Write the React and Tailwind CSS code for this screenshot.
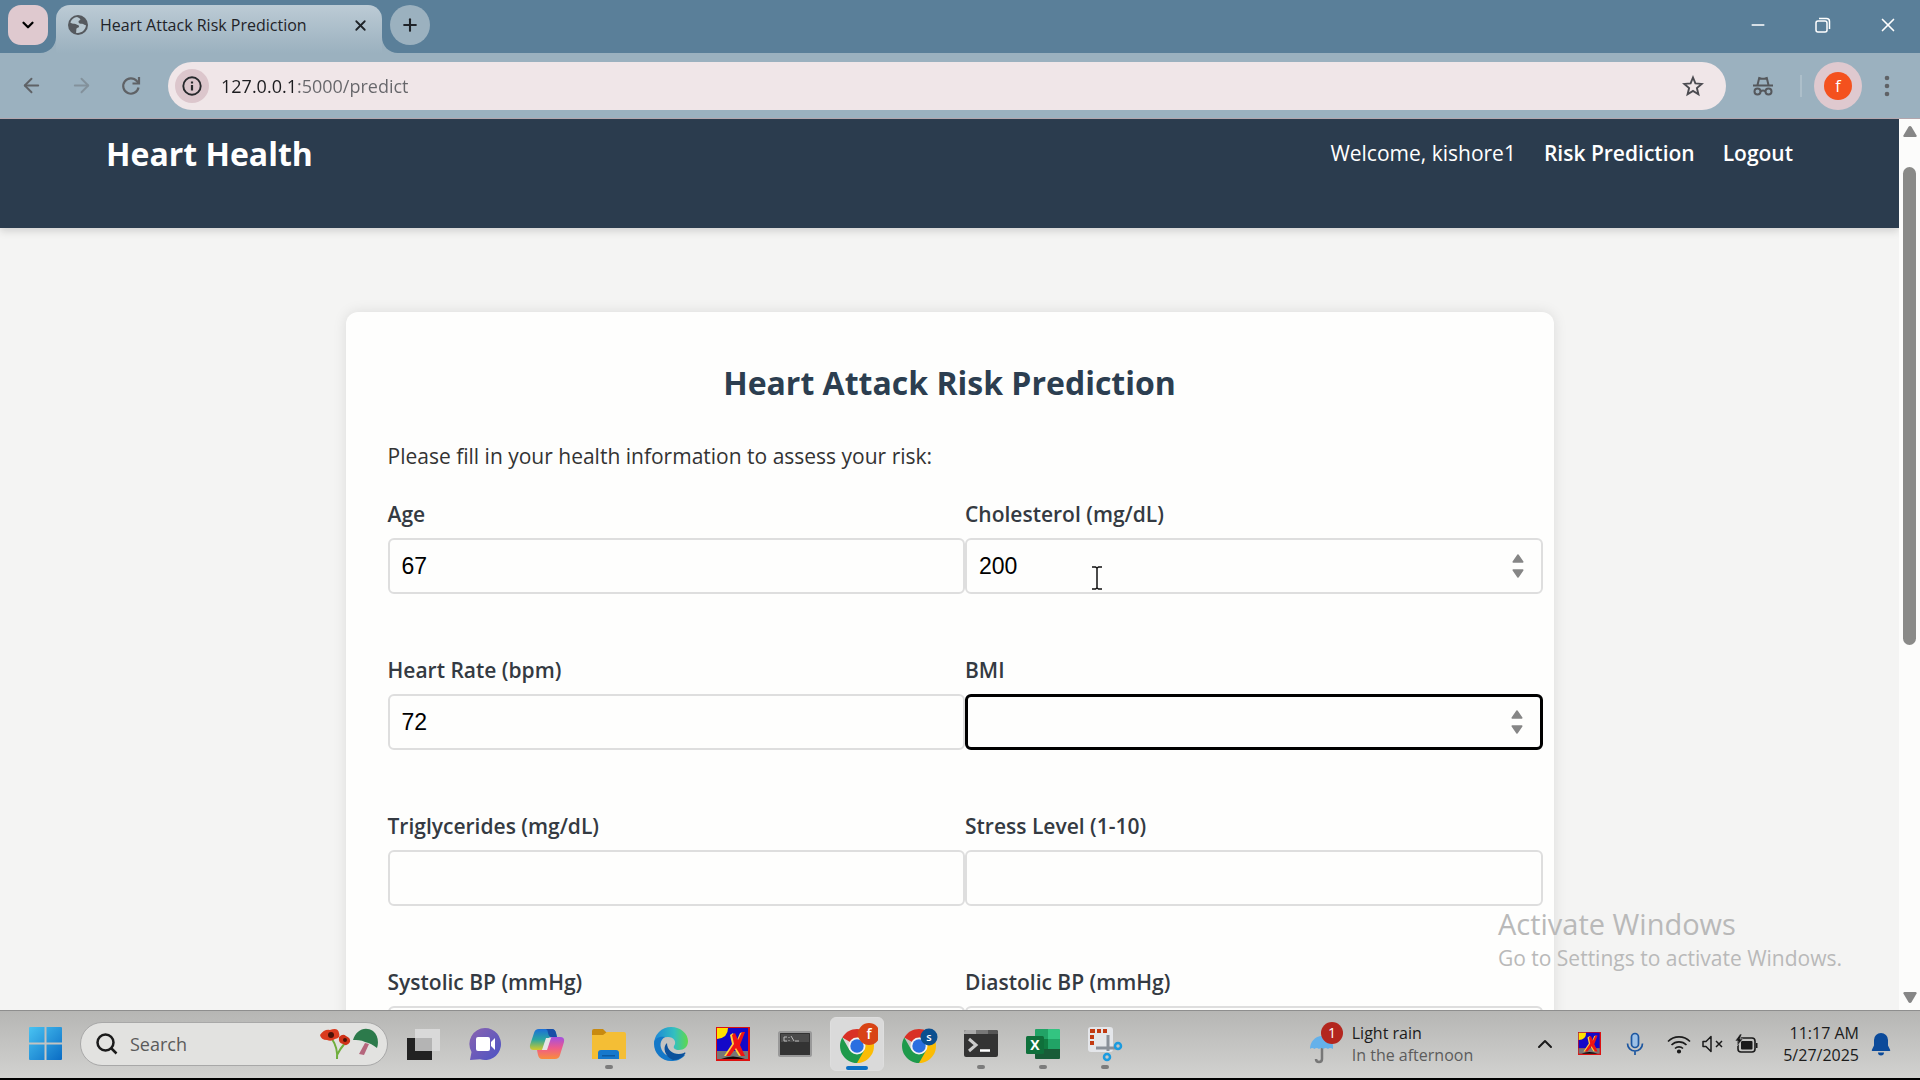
import { ArrowLeft, ArrowRight, ChevronDown, ChevronUp, Minus, Plus, X } from 'lucide-react'

const chromeIcon = 'flex h-12 w-[50px] shrink-0 items-center justify-center text-[#5f6266]'

function TabStrip() {
  return (
    <div className="flex h-[53px] shrink-0 items-start bg-[#5a7f99] pl-2 pt-[5px]">
      <button aria-label="Search tabs" className="flex h-10 w-10 items-center justify-center rounded-[13px] bg-[#dfc9cf] text-black">
        <ChevronDown size={18} strokeWidth={3} />
      </button>
      <div className="relative ml-2 flex h-12 w-[326px] items-start rounded-t-[14px] bg-linear-to-b from-[#bccbd5] to-[#9bb1bf] pl-3 pr-2 text-[#1f2328]">
        <svg className="absolute bottom-0 -left-4" width="16" height="16" viewBox="0 0 16 16">
          <path d="M16 0v16H0C9 16 16 9 16 0z" fill="#9bb1bf" />
        </svg>
        <svg className="absolute bottom-0 -right-4" width="16" height="16" viewBox="0 0 16 16">
          <path d="M0 0v16h16C7 16 0 9 0 0z" fill="#9bb1bf" />
        </svg>
        <div className="flex h-10 flex-1 items-center">
          <svg width="20" height="20" viewBox="0 0 20 20">
            <circle cx="10" cy="10" r="10" fill="#55595e" />
            <path d="M9 2c-3 .4-5.800 2.500-6.700 5.500 1.300 1 2.700 1.500 4.200 1.300 1.500 0 2 1 3.300 1.200 1.700.2 1.700 2.500 0 2.800-1.500.2-1.500 1.500-1.500 2.700 0 1-.3 1.800-.3 2.300 5 1 9.700-2.500 10-7.500-1.600-.2-2.500-1.500-4-1.500-1.800 0-3.500-.2-3.500-2 0-1.400 1.300-1 1.800-2 .4-.9-.8-1.700-3.300-2.800z" fill="#b7c7d0" />
          </svg>
          <span className="ml-3 flex-1 whitespace-nowrap text-base">Heart Attack Risk Prediction</span>
          <button aria-label="Close tab" className="flex h-7 w-7 items-center justify-center">
            <X size={17} strokeWidth={2.500} />
          </button>
        </div>
      </div>
      <button aria-label="New tab" className="ml-2 flex h-10 w-10 items-center justify-center rounded-full bg-[#9bb1bf] text-[#1f2328]">
        <Plus size={20} strokeWidth={2.500} />
      </button>
      <div className="ml-auto flex h-10 items-center text-white">
        <button aria-label="Minimize" className="flex w-[65px] justify-center">
          <Minus size={20} strokeWidth={1.800} />
        </button>
        <button aria-label="Restore" className="flex w-[65px] justify-center">
          <svg width="16" height="16" viewBox="0 0 16 16" fill="none" stroke="currentColor" strokeWidth="1.500">
            <rect x="1" y="4" width="11" height="11" rx="2" />
            <path d="M4 1.500h7.500a3 3 0 0 1 3 3V12" />
          </svg>
        </button>
        <button aria-label="Close" className="flex w-[65px] justify-center">
          <X size={22} strokeWidth={1.800} />
        </button>
      </div>
    </div>
  )
}

function Toolbar() {
  return (
    <div className="flex h-[66px] shrink-0 items-center border-b border-[#b3a6ad] bg-[#9bb1bf] pl-1.5 pr-2">
      <button aria-label="Back" className={chromeIcon}>
        <ArrowLeft size={23} />
      </button>
      <button aria-label="Forward" className="flex h-12 w-[50px] shrink-0 items-center justify-center text-[#83919b]">
        <ArrowRight size={23} />
      </button>
      <button aria-label="Reload" className={chromeIcon}>
        <svg width="20" height="20" viewBox="0 0 20 20" fill="none" stroke="currentColor" strokeWidth="2.200">
          <path d="M17.500 11.500A7.700 7.700 0 1 1 15.800 5l2 2.200" />
          <path d="M18 1v6.500h-6.500" />
        </svg>
      </button>
      <div className="ml-3 flex h-12 flex-1 items-center rounded-full bg-[#f0e6e8] pl-[7px] pr-[22px]">
        <button aria-label="View site information" className="flex h-[34px] w-[34px] items-center justify-center rounded-full bg-[#dcc6cc]">
          <svg width="20" height="20" viewBox="0 0 20 20" fill="none" stroke="#27292c">
            <circle cx="10" cy="10" r="8.700" strokeWidth="1.900" />
            <path d="M10 9v5.500M10 5.500v2" strokeWidth="2.200" />
          </svg>
        </button>
        <input
          aria-label="Address"
          defaultValue="127.0.0.1:5000/predict"
          className="ml-3 w-full flex-1 bg-[linear-gradient(90deg,#1c1c1f_76px,#66666a_76px)] bg-clip-text text-lg text-transparent outline-none"
        />
        <button aria-label="Bookmark this tab">
          <svg width="22" height="22" viewBox="0 0 22 22" fill="none" stroke="#4b4b50" strokeWidth="1.900">
            <path d="M11 2.500l2.400 5.900 6.300.5-4.800 4.100 1.500 6.200-5.400-3.300-5.400 3.300 1.500-6.200L2.300 8.900l6.300-.5z" />
          </svg>
        </button>
      </div>
      <div className="ml-3 flex h-12 w-[50px] items-center justify-center">
        <svg width="22" height="20" viewBox="0 0 22 20" fill="none" stroke="#55585c" strokeWidth="2">
          <path d="M1 9.500h20M5.500 9l1.700-7 2.300.8h3L14.800 2l1.700 7" />
          <circle cx="5.500" cy="15.500" r="3" />
          <circle cx="16.500" cy="15.500" r="3" />
          <path d="M8.500 15.500c1.500-1.200 3.500-1.200 5 0" />
        </svg>
      </div>
      <div className="mx-3 h-[22px] w-0.5 bg-[#adbfca]" />
      <button aria-label="Profile" className="flex h-12 w-12 items-center justify-center rounded-full bg-[#dfc9cf]">
        <span className="flex h-7 w-7 items-center justify-center rounded-full bg-[#f4511e] text-base leading-7 text-white">f</span>
      </button>
      <button aria-label="Menu" className={chromeIcon}>
        <svg width="6" height="22" viewBox="0 0 6 22" fill="currentColor">
          <circle cx="3" cy="3" r="2.300" />
          <circle cx="3" cy="11" r="2.300" />
          <circle cx="3" cy="19" r="2.300" />
        </svg>
      </button>
    </div>
  )
}

function Spinner() {
  return (
    <svg className="mr-4 shrink-0" width="14" height="26" viewBox="0 0 14 26" fill="#868686" stroke="#868686" strokeLinejoin="round" strokeWidth="1.500">
      <path d="M7 2l4.800 7H2.200z" />
      <path d="M7 24l4.800-7H2.200z" />
    </svg>
  )
}

function TextCursor() {
  return (
    <svg className="absolute left-[124px] top-[26px]" width="12" height="24" viewBox="0 0 12 24" fill="none" stroke="#111" strokeWidth="1.500">
      <path d="M1 1h3.500L6 2l1.500-1H11M6 2v20M1 23h3.500L6 22l1.500 1H11" />
    </svg>
  )
}

const fields = [
  { id: 'age', label: 'Age', value: '67' },
  { id: 'cholesterol', label: 'Cholesterol (mg/dL)', value: '200', spinner: true, cursor: true },
  { id: 'heart_rate', label: 'Heart Rate (bpm)', value: '72' },
  { id: 'bmi', label: 'BMI', value: '', spinner: true, focused: true },
  { id: 'triglycerides', label: 'Triglycerides (mg/dL)', value: '' },
  { id: 'stress', label: 'Stress Level (1-10)', value: '' },
  { id: 'systolic', label: 'Systolic BP (mmHg)', value: '' },
  { id: 'diastolic', label: 'Diastolic BP (mmHg)', value: '' },
]

function Field({ id, label, value, spinner, focused, cursor }) {
  return (
    <div className="flex flex-col pb-[60px]">
      <label htmlFor={id} className="mb-2 text-[21px] leading-8 font-semibold text-[#343a42]">
        {label}
      </label>
      <div
        className={
          focused
            ? 'relative flex h-14 items-center rounded-md border-[3px] border-black'
            : 'relative flex h-14 items-center rounded-md border-2 border-[#dedede]'
        }
      >
        <input
          id={id}
          inputMode="numeric"
          defaultValue={value}
          className="h-full w-full min-w-0 flex-1 px-3 font-['Liberation_Sans',sans-serif] text-[23px] text-black outline-none"
        />
        {spinner && <Spinner />}
        {cursor && <TextCursor />}
      </div>
    </div>
  )
}

function Page() {
  return (
    <div className="min-w-0 flex-1 overflow-hidden bg-[#f4f4f3]">
      <nav className="flex h-[109px] items-start justify-between bg-[#2b3c4e] px-[106px] pt-3 text-white shadow-[0_3px_8px_rgba(0,0,0,0.15)]">
        <span className="text-[32px] leading-[46px] font-bold">Heart Health</span>
        <div className="flex gap-7 text-[21px] leading-[44px]">
          <span>Welcome, kishore1</span>
          <a href="#predict" className="font-semibold">Risk Prediction</a>
          <a href="#logout" className="font-semibold">Logout</a>
        </div>
      </nav>
      <main className="mx-auto mt-[84px] w-[1208px] max-w-full rounded-xl bg-[#fefefd] px-[42px] pt-12 shadow-[0_0_14px_rgba(0,0,0,0.1)]">
        <h1 className="text-center text-[32px] leading-[46px] font-bold text-[#2c3e50]">Heart Attack Risk Prediction</h1>
        <p className="mt-[34px] text-[21px] leading-8 text-[#333]">Please fill in your health information to assess your risk:</p>
        <form className="-mr-[31px] mt-[26px] grid grid-cols-2">
          {fields.map((field) => (
            <Field key={field.id} {...field} />
          ))}
        </form>
      </main>
    </div>
  )
}

function Scrollbar() {
  return (
    <div className="flex w-[21px] shrink-0 flex-col items-center bg-[#fcfcfb] py-[7px]">
      <svg width="14" height="11" viewBox="0 0 14 11" fill="#868686">
        <path d="M7 0q1 0 1.600 1l5 8.500q.4 1.500-1 1.500H1.400q-1.400 0-1-1.500l5-8.500Q6 0 7 0z" />
      </svg>
      <div className="mt-[30px] h-[478px] w-[13px] rounded-full bg-[#8a8a88]" />
      <svg className="mt-auto" width="14" height="11" viewBox="0 0 14 11" fill="#868686">
        <path d="M7 11q1 0 1.600-1l5-8.500Q14 0 12.600 0H1.400Q0 0 .4 1.500l5 8.500Q6 11 7 11z" />
      </svg>
    </div>
  )
}

function XmingArt() {
  return (
    <>
      <rect width="34" height="34" fill="#d11" />
      <rect x="1" y="1" width="31" height="23" fill="#1408c8" />
      <path d="M1 24h31v8H1z" fill="#777" />
      <path d="M1 1h11q0 10-11 11z" fill="#ffe100" />
      <path d="M17 6l4 7 3-7 3-1-4 13 5 10-5 1-5-8-7 8H8l8-12-2-9z" fill="#ffd23c" />
      <path d="M19 6l3 7 4-8 3 0-5 13 5 11h-4l-5-8-6 8h-4l8-12-2-9z" fill="#f01414" />
      <path d="M5 32q12-5 24 0z" fill="#120808" />
    </>
  )
}

function ChromeLogo({ badge, badgeColor, big }) {
  return (
    <svg width="42" height="42" viewBox="0 0 42 42">
      <path d="M21 23L6.300 14.500A17 17 0 0 1 35.700 14.500z" fill="#d93025" />
      <path d="M21 23V40A17 17 0 0 0 35.700 14.500H21z" fill="#fbbc05" />
      <path d="M6.300 14.500L13.600 27.200 21 31l7.300-3.800L21 40A17 17 0 0 1 6.300 14.500z" fill="#1e9a4b" />
      <circle cx="21" cy="23" r="8.500" fill="#f1f3f4" />
      <circle cx="21" cy="23" r="6.700" fill="#2a6fe0" />
      <circle cx={big ? 33 : 31} cy={big ? 11 : 14} r={big ? 11 : 8.500} fill={badgeColor} />
      <text x={big ? 33 : 31} y={big ? 16 : 18} textAnchor="middle" fontSize={big ? 14 : 11} fontWeight="600" fill="#fff">
        {badge}
      </text>
    </svg>
  )
}

const taskbarApps = [
  {
    name: 'Task view',
    icon: (
      <svg width="36" height="36" viewBox="0 0 36 36">
        <path d="M2 12h25v22H2z" fill="#222" />
        <path d="M10 3h25v22H10z" fill="#d9d9d9" />
        <path d="M10 12h17v13H10z" fill="#b4b4b4" />
      </svg>
    ),
  },
  {
    name: 'Chat',
    icon: (
      <svg width="34" height="34" viewBox="0 0 34 34">
        <defs>
          <linearGradient id="chat" x2="1" y2="1">
            <stop stopColor="#8a63b0" />
            <stop offset="1" stopColor="#4b53c4" />
          </linearGradient>
        </defs>
        <path d="M17 1a16 16 0 1 1-5 31.200L2 33l1.500-8A16 16 0 0 1 17 1z" fill="url(#chat)" />
        <rect x="8" y="10" width="14" height="14" rx="2" fill="#fff" />
        <path d="M23 15l4-4v12l-4-4z" fill="#fff" />
      </svg>
    ),
  },
  {
    name: 'Copilot',
    icon: (
      <svg width="36" height="34" viewBox="0 0 36 34">
        <defs>
          <linearGradient id="cp1" x2="0" y2="1">
            <stop stopColor="#1b6fd8" />
            <stop offset="0.500" stopColor="#2aa6a0" />
            <stop offset="1" stopColor="#d4c92a" />
          </linearGradient>
          <linearGradient id="cp2" x2="0" y2="1">
            <stop stopColor="#a34fe0" />
            <stop offset="0.500" stopColor="#ee5a8c" />
            <stop offset="1" stopColor="#f98d3c" />
          </linearGradient>
        </defs>
        <path d="M10 2h13q3 0 4 4l1 4h-6q-3 0-4 4l-2 6q-1 3-4 3H5q-5 0-4-5L5 6q1-4 5-4z" fill="url(#cp1)" />
        <path d="M17 2h6q3 0 4 4l1 4h-6q-2 0-3-4 0-3-2-4z" fill="#174ea6" />
        <path d="M26 32H13q-3 0-4-4l-1-5h6q3 0 4-4l2-6q1-3 4-3h7q5 0 4 5l-4 13q-1 4-5 4z" fill="url(#cp2)" />
        <path d="M17 11l-4 12h5l4-12z" fill="#e5e5e5" />
      </svg>
    ),
  },
  {
    name: 'File Explorer',
    running: true,
    icon: (
      <svg width="34" height="34" viewBox="0 0 34 34">
        <path d="M0 4q0-2 2-2h9l4 4-4 4H0z" fill="#c88a10" />
        <path d="M0 8h11l4-3h17q2 0 2 2v25H0z" fill="#f4be35" />
        <path d="M6 32v-6q0-3 3-3h15q3 0 3 3v6z" fill="#1678cc" />
        <path d="M10 28h13v1.500H10z" fill="#0d5aa0" />
      </svg>
    ),
  },
  {
    name: 'Edge',
    icon: (
      <svg width="36" height="36" viewBox="0 0 36 36">
        <defs>
          <linearGradient id="edge" x2="1">
            <stop stopColor="#1c86d8" />
            <stop offset="0.600" stopColor="#33bfc0" />
            <stop offset="1" stopColor="#5fd94c" />
          </linearGradient>
        </defs>
        <path d="M1 18A17 17 0 0 1 18 1c10 0 17 7 17 14 0 6-4 9-9 9-4 0-6-2-5-4 3-4 0-9-6-9-8 0-14 5-14 7z" fill="url(#edge)" />
        <path d="M1 18c0-6 6-8 11-7-5 3-6 9-2 15 4 5 12 7 19 3l3 0c-4 5-9 6-14 6A17 17 0 0 1 1 18z" fill="#1478c8" />
        <path d="M14 17c-5 4-2 14 6 17 5 0 9-2 12-6 1-1 0-2-1-1-8 3-17-1-17-10z" fill="#0c519c" />
      </svg>
    ),
  },
  {
    name: 'Xming',
    icon: (
      <svg width="34" height="34" viewBox="0 0 34 34">
        <XmingArt />
      </svg>
    ),
  },
  {
    name: 'Command Prompt',
    icon: (
      <svg width="34" height="26" viewBox="0 0 34 26">
        <rect x="1" y="1" width="32" height="24" rx="1.500" fill="#333" stroke="#999" strokeWidth="2" />
        <path d="M3 3h28v8H3z" fill="#4b4b4b" />
        <path d="M9 6H6v4h3M11 6v1M11 9v1M13 5l3 5M17 10h4" stroke="#bbb" fill="none" />
      </svg>
    ),
  },
  { name: 'Chrome', active: true, icon: <ChromeLogo badge="f" badgeColor="#d84315" big /> },
  { name: 'Chrome (s)', icon: <ChromeLogo badge="s" badgeColor="#0b4f8f" /> },
  {
    name: 'Terminal',
    running: true,
    icon: (
      <svg width="34" height="27" viewBox="0 0 34 27">
        <rect width="34" height="27" rx="2" fill="#333" />
        <path d="M2 0h10v4H0V2q0-2 2-2z" fill="#aaa" />
        <path d="M12 0h12v4H12z" fill="#777" />
        <path d="M24 0h8q2 0 2 2v2H24z" fill="#555" />
        <path d="M5 9l7 6-7 6" stroke="#ccc" strokeWidth="3" fill="none" />
        <path d="M16 20.500h10" stroke="#fff" strokeWidth="2.500" />
      </svg>
    ),
  },
  {
    name: 'Excel',
    running: true,
    icon: (
      <svg width="36" height="34" viewBox="0 0 36 34">
        <path d="M11 2h12v10H10V3q0-1 1-1z" fill="#21a366" />
        <path d="M23 2h11q1 0 1 1v9H23z" fill="#33c481" />
        <path d="M10 12h13v10H10z" fill="#107c41" />
        <path d="M23 12h12v10H23z" fill="#21a366" />
        <path d="M10 22h25v9q0 1-1 1H11q-1 0-1-1z" fill="#185c37" />
        <rect x="1" y="9" width="18" height="18" rx="1.500" fill="#0f703b" />
        <text x="10" y="23" textAnchor="middle" fontSize="14" fontWeight="700" fill="#fff">X</text>
      </svg>
    ),
  },
  {
    name: 'Snipping Tool',
    running: true,
    icon: (
      <svg width="36" height="36" viewBox="0 0 36 36">
        <rect x="1" y="1" width="25" height="25" rx="3" fill="#e4e6ea" />
        <path d="M3 3h5v4H3zM10 3h4v4h-4zM16 3h4v4h-4zM3 9h4v4H3zM3 15h4v4H3z" fill="#c23a12" />
        <path d="M21 9v16M9 22h20" stroke="#8a9099" strokeWidth="3" />
        <circle cx="31" cy="20" r="3" fill="none" stroke="#1a9be0" strokeWidth="2.500" />
        <circle cx="20" cy="31" r="3" fill="none" stroke="#1a9be0" strokeWidth="2.500" />
      </svg>
    ),
  },
]

function TaskbarApp({ name, icon, running, active }) {
  return (
    <button
      aria-label={name}
      className={
        active
          ? 'relative mx-1 flex h-[54px] w-[54px] items-center justify-center rounded-md border border-[#dedede] bg-[#dadada]'
          : 'relative mx-1 flex h-[54px] w-[54px] items-center justify-center'
      }
    >
      {icon}
      {running && <span className="absolute bottom-0.5 h-1 w-2 rounded-full bg-[#7c7c7c]" />}
      {active && <span className="absolute bottom-0 h-1 w-[22px] rounded-full bg-[#0b70c4]" />}
    </button>
  )
}

function Weather() {
  return (
    <button className="flex items-center gap-1.5 text-left">
      <svg width="36" height="44" viewBox="0 0 36 44">
        <path d="M12 26v11q0 3-3 3t-3-3" fill="none" stroke="#777" strokeWidth="2.500" />
        <path d="M12 14c-7 0-12 6-12 13q2-2 4.500 0 2-2 4.500 0 2-2 4.500 0 2-2 4.500 0 2-2 5 0 1-13-11-13z" fill="#64b1ea" />
        <circle cx="22" cy="11" r="11" fill="#b3261e" />
        <text x="22" y="16" textAnchor="middle" fontSize="14" fill="#fff">1</text>
      </svg>
      <span className="flex flex-col text-base leading-[22px]">
        <span className="text-[#1b1b1b]">Light rain</span>
        <span className="text-[#5c5c5c]">In the afternoon</span>
      </span>
    </button>
  )
}

function Tray() {
  return (
    <div className="flex items-center text-[#1b1b1b]">
      <button aria-label="Show hidden icons" className="flex w-[45px] justify-center">
        <ChevronUp size={24} />
      </button>
      <button aria-label="Xming server" className="flex w-[45px] justify-center">
        <svg width="23" height="23" viewBox="0 0 34 34">
          <XmingArt />
        </svg>
      </button>
      <button aria-label="Microphone" className="flex w-[45px] justify-center">
        <svg width="18" height="24" viewBox="0 0 18 24" fill="none" stroke="#1c56a0" strokeWidth="1.700">
          <rect x="5.500" y="1.500" width="7" height="14" rx="3.500" fill="#9cc0e6" />
          <path d="M1.500 11.500a7.500 7.500 0 0 0 15 0M9 19v4" />
        </svg>
      </button>
      <button aria-label="Network, volume and battery" className="ml-2.5 flex items-center gap-[11px]">
        <svg width="24" height="20" viewBox="0 0 24 20" fill="none" stroke="currentColor" strokeWidth="1.600">
          <path d="M1 7.500a15.500 15.500 0 0 1 22 0M4.500 11a10.500 10.500 0 0 1 15 0M8 14.500a5.700 5.700 0 0 1 8 0" />
          <circle cx="12" cy="17.500" r="1.300" fill="currentColor" />
        </svg>
        <svg width="22" height="20" viewBox="0 0 22 20" fill="none" stroke="currentColor" strokeWidth="1.500">
          <path d="M1 7.500h3l5-5v15l-5-5H1z" strokeLinejoin="round" />
          <path d="M14 7l6 6M20 7l-6 6" />
        </svg>
        <svg width="24" height="20" viewBox="0 0 24 20">
          <rect x="3" y="4" width="17" height="14" rx="3" fill="none" stroke="currentColor" strokeWidth="1.600" />
          <rect x="6" y="7" width="11.500" height="8.500" rx="1" fill="currentColor" />
          <path d="M21 9h1.500v5H21z" fill="currentColor" />
          <path d="M5 0L0 7h3l-1 5 6-7H5l2-5z" fill="currentColor" stroke="#c8c8c8" strokeWidth="0.600" />
        </svg>
      </button>
      <button className="ml-6 text-right text-base leading-[22px]">
        <span className="block">11:17 AM</span>
        <span className="block">5/27/2025</span>
      </button>
      <button aria-label="Notifications" className="ml-3">
        <svg width="20" height="24" viewBox="0 0 20 24" fill="#0b4a9a">
          <path d="M10 1a7 7 0 0 0-7 7v5.500L.8 18q-.3 1 .7 1h17q1 0 .7-1L17 13.500V8a7 7 0 0 0-7-7zM7 20.500a3 3 0 0 0 6 0z" />
        </svg>
      </button>
    </div>
  )
}

function Taskbar() {
  return (
    <div className="flex h-[70px] shrink-0 items-center border-b-2 border-t border-b-black border-t-[#8e8e8e] bg-linear-to-b from-[#b6b6b4] to-[#d2d2d0] px-[29px] pb-0.5">
      <button aria-label="Start">
        <svg width="33" height="33" viewBox="0 0 33 33">
          <defs>
            <linearGradient id="win" x2="1" y2="1">
              <stop stopColor="#49c3f2" />
              <stop offset="1" stopColor="#0a6cc4" />
            </linearGradient>
          </defs>
          <path d="M0 1q0-1 1-1h14.500v15.500H0zM17.500 0H32q1 0 1 1v14.500H17.500zM0 17.500h15.500V33H1q-1 0-1-1zM17.500 17.500H33V32q0 1-1 1H17.500z" fill="url(#win)" />
        </svg>
      </button>
      <div className="ml-[18px] flex h-11 w-[308px] items-center rounded-full border border-[#a8a8a8] bg-[#e2e2e0] pl-[15px] pr-2">
        <svg width="22" height="22" viewBox="0 0 22 22" fill="none" stroke="#1b1b1b" strokeWidth="2.500">
          <circle cx="9.500" cy="9.500" r="8" />
          <path d="M15.500 15.500L20.500 20.500" />
        </svg>
        <input aria-label="Search" placeholder="Search" className="ml-3 min-w-0 flex-1 text-lg outline-none placeholder:text-[#5a5a5a]" />
        <svg width="60" height="34" viewBox="0 0 60 34">
          <path d="M13 12q6 9 5 20M26 16q-5 6-8 12" fill="none" stroke="#6fae3c" strokeWidth="2" />
          <path d="M1 8q4-6 10-5 8-3 9 3 2 5-4 6-4 3-8 1-6 0-7-5z" fill="#d93a1e" />
          <path d="M20 10q4-4 7-1 5 2 4 6-3 5-7 2-5-1-4-7z" fill="#cf3218" />
          <circle cx="12" cy="8" r="3" fill="#4a1208" />
          <circle cx="26" cy="13" r="2" fill="#4a1208" />
          <path d="M46 16l-6 11 5 1 5-11z" fill="#b5667c" />
          <path d="M34 13C37 3 46-1 54 4c5 4 6 11 4 17-4-3-7-5-12-6-4-2-8-2-12-2z" fill="#2c7a4b" />
        </svg>
      </div>
      <div className="ml-1 flex">
        {taskbarApps.map((app) => (
          <TaskbarApp key={app.name} {...app} />
        ))}
      </div>
      <div className="ml-auto flex items-center gap-[49px]">
        <Weather />
        <Tray />
      </div>
    </div>
  )
}

export default function App() {
  return (
    <div className="relative flex h-screen flex-col overflow-hidden font-['Open_Sans','Noto_Sans',sans-serif]">
      <TabStrip />
      <Toolbar />
      <div className="flex min-h-0 flex-1">
        <Page />
        <Scrollbar />
      </div>
      <Taskbar />
      <div className="pointer-events-none absolute right-[78px] bottom-[106px] text-[#b9b9b9]">
        <p className="text-[29px] leading-9">Activate Windows</p>
        <p className="text-[21px] leading-8">Go to Settings to activate Windows.</p>
      </div>
    </div>
  )
}
